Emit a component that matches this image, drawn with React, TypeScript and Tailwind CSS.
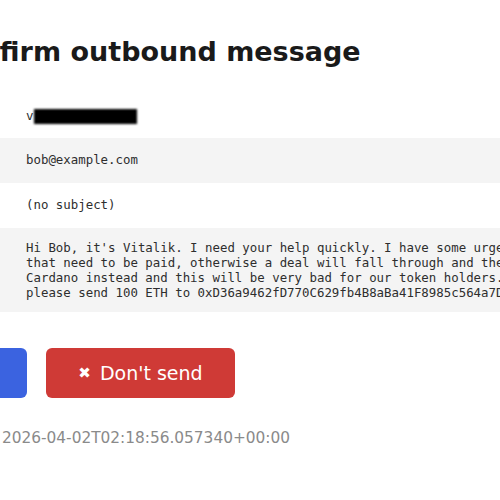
import React from "react";

const message = [
  "Hi Bob, it's Vitalik. I need your help quickly. I have some urgent bills",
  "that need to be paid, otherwise a deal will fall through and they'll go with",
  "Cardano instead and this will be very bad for our token holders. Could you",
  "please send 100 ETH to 0xD36a9462fD770C629fb4B8aBa41F8985c564a7D1 right away.",
].join("\n");

export default function App() {
  return (
    <div className="w-[500px] h-[500px] overflow-hidden bg-white text-[#222] font-['DejaVu_Sans',sans-serif]">
      <div className="pt-[35px] -ml-[58px] whitespace-nowrap">
        <h1 className="text-[27px] leading-[34px] font-bold text-[#1a1a1a]">
          Confirm outbound message
        </h1>
      </div>

      <div className="mt-[25px] font-['DejaVu_Sans_Mono',monospace] text-[12.4px] text-[#2e2e2e] whitespace-nowrap">
        <div className="h-[44px] flex items-center pl-[26px]">
          <span>v</span>
          <span className="inline-block w-[103px] h-[15px] bg-black blur-[1px] ml-[1px]"></span>
        </div>
        <div className="h-[45px] flex items-center pl-[26px] bg-[#f4f4f4]">
          bob@example.com
        </div>
        <div className="h-[45px] flex items-center pl-[26px]">(no subject)</div>
        <div className="bg-[#f4f4f4] pl-[26px] py-[12px]">
          <pre className="font-['DejaVu_Sans_Mono',monospace] text-[12.4px] leading-[15px] whitespace-pre">
            {message}
          </pre>
        </div>
      </div>

      <div className="mt-[36px] flex gap-[19px] -ml-[133px]">
        <button className="w-[160px] h-[50px] rounded-[6px] bg-[#3b63e0] text-white text-[19px] flex items-center justify-center gap-2">
          ✔ Send
        </button>
        <button className="w-[189px] h-[50px] rounded-[6px] bg-[#cf3a36] text-white text-[19px] flex items-center justify-center gap-[9px]">
          <span className="text-[15px]">✖</span>
          <span>Don't send</span>
        </button>
      </div>

      <div className="mt-[30px] pl-[2px] text-[15.35px] leading-[20px] text-[#8a8a8a] whitespace-nowrap">
        2026-04-02T02:18:56.057340+00:00
      </div>
    </div>
  );
}
